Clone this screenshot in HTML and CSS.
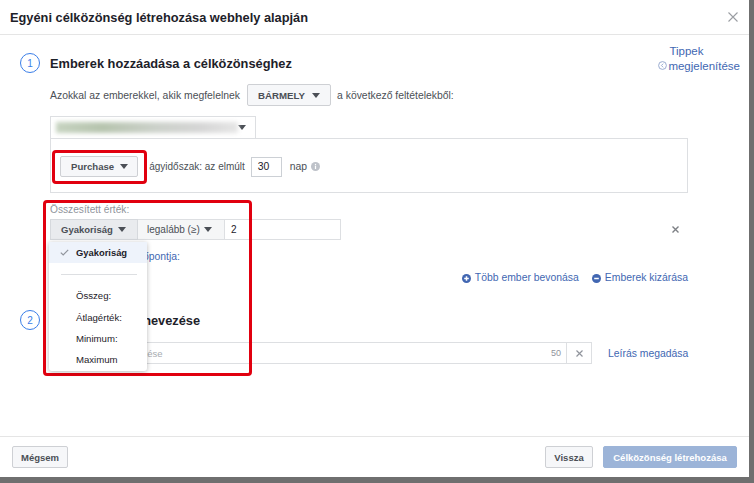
FILE: index.html
```html
<!DOCTYPE html>
<html lang="hu">
<head>
<meta charset="utf-8">
<title>Egyéni célközönség</title>
<link rel="stylesheet" href="styles.css">
</head>
<body>
<div class="dialog">
  <header class="dlg-head">
    <h1 class="dlg-title">Egyéni célközönség létrehozása webhely alapján</h1>
    <svg class="close" width="10" height="10" viewBox="0 0 10 10"><path d="M0.5 0.5L9.5 9.5M9.5 0.5L0.5 9.5"/></svg>
  </header>

  <main class="dlg-body">
    <section class="sec">
      <div class="sec-head">
        <div class="num-title"><span class="num">1</span><h2 class="sec-title">Emberek hozzáadása a célközönséghez</h2></div>
        <a class="tips">
          <span class="tips-l1">Tippek</span>
          <span class="tips-l2"><svg class="tips-ico" width="9" height="9" viewBox="0 0 9 9"><circle cx="4.5" cy="4.5" r="3.9"/><path d="M5.2 2.7L3.4 4.5L5.2 6.3"/></svg>megjelenítése</span>
        </a>
      </div>

      <div class="sec-content">
        <div class="match-row">
          <span>Azokkal az emberekkel, akik megfelelnek</span>
          <span class="btn btn-any">BÁRMELY<svg class="caret" width="8" height="5" viewBox="0 0 8 5"><path d="M0 0h8L4 5z"/></svg></span>
          <span>a következő feltételekből:</span>
        </div>

        <div class="source-select">
          <span class="blurred"></span>
          <svg class="caret" width="8" height="5" viewBox="0 0 8 5"><path d="M0 0h8L4 5z"/></svg>
        </div>

        <div class="rule-box">
          <span class="btn btn-event">Purchase<svg class="caret" width="8" height="5" viewBox="0 0 8 5"><path d="M0 0h8L4 5z"/></svg></span>
          <span class="period">ágyidőszak: az elmúlt</span>
          <span class="days">30</span>
          <span class="nap">nap</span>
          <svg class="info" width="9" height="9" viewBox="0 0 9 9"><circle cx="4.5" cy="4.5" r="4.5"/><rect x="3.9" y="3.7" width="1.2" height="3.3" fill="#fff"/><rect x="3.9" y="1.9" width="1.2" height="1.2" fill="#fff"/></svg>
        </div>

        <div class="agg-label">Összesített érték:</div>
        <div class="agg-row">
          <span class="sel sel-gy">Gyakoriság<svg class="caret" width="8" height="5" viewBox="0 0 8 5"><path d="M0 0h8L4 5z"/></svg></span>
          <span class="sel sel-op">legalább (≥)<svg class="caret" width="8" height="5" viewBox="0 0 8 5"><path d="M0 0h8L4 5z"/></svg></span>
          <span class="val">2</span>
          <svg class="remove" width="7" height="7" viewBox="0 0 7 7"><path d="M0.5 0.5L6.5 6.5M6.5 0.5L0.5 6.5"/></svg>
        </div>

        <a class="time-link">Összesítés kezdő időpontja:</a>

        <div class="include-row">
          <a class="inc"><svg class="pm" width="9" height="9" viewBox="0 0 9 9"><circle cx="4.5" cy="4.5" r="4.5"/><path d="M4.5 2.2V6.8M2.2 4.5H6.8"/></svg>Több ember bevonása</a>
          <a class="inc"><svg class="pm" width="9" height="9" viewBox="0 0 9 9"><circle cx="4.5" cy="4.5" r="4.5"/><path d="M2.2 4.5H6.8"/></svg>Emberek kizárása</a>
        </div>
      </div>
    </section>

    <section class="sec sec2">
      <div class="num-title"><span class="num">2</span><h2 class="sec-title">Célközönség elnevezése</h2></div>
      <div class="sec-content">
        <div class="name-row">
          <div class="name-input">
            <span class="placeholder">Célközönség elnevezése</span>
            <span class="counter">50</span>
            <span class="clear"><svg width="7" height="7" viewBox="0 0 7 7"><path d="M0.5 0.5L6.5 6.5M6.5 0.5L0.5 6.5"/></svg></span>
          </div>
          <a class="desc-link">Leírás megadása</a>
        </div>
      </div>
    </section>
  </main>

  <footer class="dlg-foot">
    <span class="btn fbtn">Mégsem</span>
    <span class="spacer"></span>
    <span class="btn fbtn">Vissza</span>
    <span class="btn fbtn primary">Célközönség létrehozása</span>
  </footer>

  <div class="hl hl1"></div>
  <div class="hl hl2"></div>

  <ul class="menu">
    <li class="mi active"><svg class="check" width="9" height="7" viewBox="0 0 9 7"><path d="M0.8 3.6L3.2 6L8.2 0.8"/></svg>Gyakoriság</li>
    <li class="mi-sep"><span></span></li>
    <li class="mi">Összeg:</li>
    <li class="mi">Átlagérték:</li>
    <li class="mi">Minimum:</li>
    <li class="mi">Maximum</li>
  </ul>
</div>
</body>
</html>
```

FILE: styles.css
```css
* { box-sizing: border-box; margin: 0; padding: 0; }
html, body { width: 754px; height: 483px; overflow: hidden; }
body {
  background: #6f6f6f;
  font-family: "Liberation Sans", Arial, sans-serif;
  font-size: 10.4px;
  color: #1d2129;
  white-space: nowrap;
}
a { color: #4267b2; text-decoration: none; }

.dialog {
  position: relative;
  width: 749px;
  height: 477px;
  background: #fff;
  display: flex;
  flex-direction: column;
}

/* header */
.dlg-head {
  height: 35px;
  flex: none;
  border-bottom: 1px solid #e5e5e5;
  display: flex;
  align-items: center;
  justify-content: space-between;
  padding: 0 11px 0 10px;
}
.dlg-title { font-size: 12.8px; font-weight: bold; color: #1d2129; }
.close path { stroke: #9a9da2; stroke-width: 1.1; fill: none; }

/* body */
.dlg-body { flex: 1; padding: 9px 9px 0 20px; }
.sec-head { display: flex; justify-content: space-between; align-items: flex-end; }
.num-title { display: flex; align-items: center; height: 20px; }
.num {
  width: 20px; height: 20px;
  border: 1.5px solid #3a7ee8;
  border-radius: 50%;
  display: flex; align-items: center; justify-content: center;
  font-size: 10px; color: #3a7ee8;
}
.sec-title { font-size: 12.8px; font-weight: bold; margin-left: 10px; color: #1d2129; }

.tips { display: flex; flex-direction: column; font-size: 11.5px; line-height: 14.5px; }
.tips-l1 { padding-left: 11px; }
.tips-l2 { display: flex; align-items: center; }
.tips-ico { margin-right: 1px; }
.tips-ico circle { fill: none; stroke: #8fa3cc; stroke-width: 0.9; }
.tips-ico path { fill: none; stroke: #8fa3cc; stroke-width: 0.9; }

.sec-content { margin-left: 30px; width: 638px; }

.caret { flex: none; }
.caret path { fill: #4b4f56; }

.btn {
  display: inline-flex;
  align-items: center;
  height: 22px;
  border: 1px solid #ced0d4;
  background: #f6f7f9;
  border-radius: 2px;
  font-weight: bold;
  font-size: 9.7px;
  color: #4b4f56;
}

.match-row {
  margin-top: 11px;
  height: 22px;
  display: flex;
  align-items: center;
  color: #4b4f56;
}
.btn-any { margin: 0 6px 0 7px; padding: 0 10px 0 10px; gap: 7px; }

.source-select {
  margin-top: 10px;
  width: 206px;
  height: 22px;
  border: 1px solid #dddfe2;
  border-bottom: none;
  display: flex;
  align-items: center;
  justify-content: space-between;
  padding: 0 9px 0 5px;
}
.blurred {
  width: 182px;
  height: 11px;
  background: linear-gradient(90deg, #c6d3c0 0%, #b6c4ae 25%, #ccd1ca 55%, #d6d6d6 80%, #e6e6e6 100%);
  filter: blur(2px);
}

.rule-box {
  height: 55px;
  border: 1px solid #dddfe2;
  display: flex;
  align-items: center;
  padding: 2px 9px 0 9px;
  color: #4b4f56;
}
.btn-event { height: 21px; padding: 0 9px 0 10px; gap: 6px; font-size: 9.6px; }
.period { margin-left: 11px; font-size: 10px; }
.days {
  margin-left: 6px;
  width: 31px; height: 20px;
  border: 1px solid #ccd0d5;
  display: flex; align-items: center;
  padding-left: 6px;
  color: #1d2129;
}
.nap { margin-left: 8px; }
.info { margin-left: 4px; }
.info circle { fill: #bec2c9; }

.agg-label { margin-top: 11px; line-height: 12px; font-size: 10.2px; color: #90949c; }
.agg-row { margin-top: 3px; height: 21px; display: flex; align-items: center; }
.sel {
  height: 21px;
  display: flex; align-items: center;
  border: 1px solid #dddfe2;
  color: #4b4f56;
}
.sel-gy {
  width: 88px;
  background: #e9ebee;
  border-color: #d6d9dd;
  font-weight: bold;
  font-size: 9.5px;
  padding-left: 10px;
  gap: 5px;
}
.sel-op {
  width: 87px;
  background: #f5f6f7;
  border-left: none;
  font-size: 10px;
  padding-left: 9px;
  gap: 4px;
}
.val {
  width: 116px; height: 21px;
  border: 1px solid #dddfe2;
  border-left: none;
  display: flex; align-items: center;
  padding-left: 6px;
  font-size: 10px;
}
.remove { margin-left: auto; margin-right: 9px; }
.remove path { stroke: #7d8085; stroke-width: 1.4; fill: none; }

.time-link { display: block; margin-top: 10px; line-height: 14px; }

.include-row {
  margin-top: 7px;
  line-height: 14px;
  display: flex;
  justify-content: flex-end;
  gap: 13px;
}
.inc { display: flex; align-items: center; gap: 4px; }
.pm circle { fill: #4267b2; }
.pm path { stroke: #fff; stroke-width: 1.5; fill: none; }

.sec2 { margin-top: 25px; }
.name-row { margin-top: 12px; display: flex; align-items: center; }
.name-input {
  width: 542px; height: 22px;
  flex: none;
  border: 1px solid #dddfe2;
  display: flex; align-items: center;
}
.placeholder { flex: 1; padding-left: 6px; color: #a7abb1; font-size: 9.5px; }
.counter { font-size: 9px; color: #90949c; margin-right: 5px; }
.clear {
  width: 25px; height: 100%;
  border-left: 1px solid #dddfe2;
  display: flex; align-items: center; justify-content: center;
}
.clear path { stroke: #90949c; stroke-width: 1.2; fill: none; }
.desc-link { margin-left: 16px; flex: none; }

/* footer */
.dlg-foot {
  height: 41px;
  flex: none;
  border-top: 1px solid #e5e5e5;
  display: flex;
  align-items: center;
  padding: 0 12px;
  gap: 10px;
}
.spacer { flex: 1; }
.fbtn { font-size: 9.5px; justify-content: center; }
.fbtn:nth-child(1) { width: 56px; }
.fbtn:nth-child(3) { width: 48px; }
.primary { width: 134px; background: #9cb4d8; border-color: #9cb4d8; color: #fff; }

/* annotation highlights */
.hl {
  position: absolute;
  border: 3px solid #e1000f;
  border-radius: 4px;
}
.hl1 { left: 52px; top: 150px; width: 95px; height: 34px; }
.hl2 { left: 43px; top: 200px; width: 209px; height: 176px; }

/* dropdown menu */
.menu {
  position: absolute;
  left: 49px; top: 242px;
  width: 98px;
  background: #fff;
  list-style: none;
  box-shadow: 0 1px 5px rgba(0,0,0,0.28);
  border-radius: 0 0 3px 3px;
  padding-bottom: 1px;
}
.mi {
  height: 21.3px;
  display: flex; align-items: center;
  padding-left: 27px;
  font-size: 9.6px;
  color: #1d2129;
}
.mi.active {
  background: #eef3fb;
  font-weight: bold;
  font-size: 9.4px;
  padding-left: 11px;
  gap: 7px;
}
.check path { stroke: #90949c; stroke-width: 1.2; fill: none; }
.mi-sep { height: 22px; display: flex; align-items: center; padding: 0 10px 0 12px; }
.mi-sep span { display: block; width: 100%; height: 1px; background: #dddfe2; }
```
